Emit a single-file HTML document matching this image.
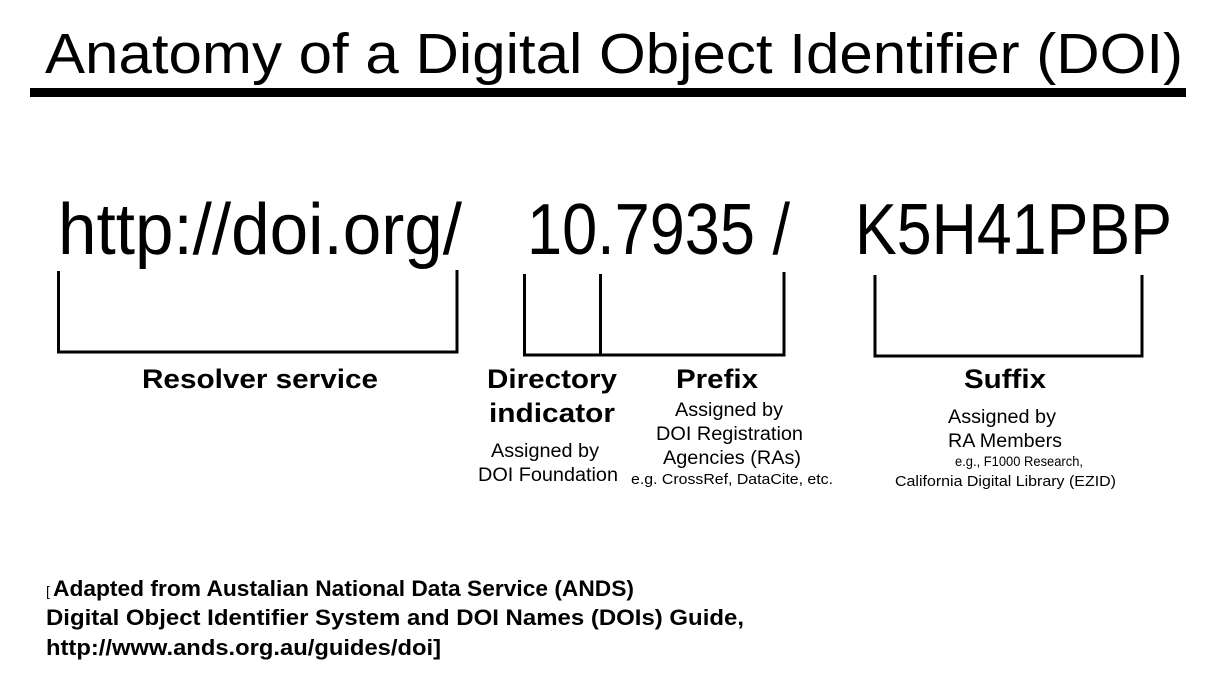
<!DOCTYPE html>
<html><head><meta charset="utf-8"><style>
html,body{margin:0;padding:0;background:#fff;}
svg{display:block;}
text{font-family:"Liberation Sans",Arial,sans-serif;fill:#000;}
.b{font-weight:bold;}
</style></head><body>
<svg width="1215" height="686" viewBox="0 0 1215 686" xmlns="http://www.w3.org/2000/svg">
<text x="45" y="73" font-size="57" textLength="1138" lengthAdjust="spacingAndGlyphs">Anatomy of a Digital Object Identifier (DOI)</text>
<rect x="30" y="88" width="1156" height="9" fill="#000"/>

<text x="58" y="254" font-size="72" textLength="404" lengthAdjust="spacingAndGlyphs">http://doi.org/</text>
<text x="527" y="254" font-size="72" textLength="263" lengthAdjust="spacingAndGlyphs">10.7935 /</text>
<text x="855" y="254" font-size="72" textLength="317" lengthAdjust="spacingAndGlyphs">K5H41PBP</text>

<g fill="none" stroke="#000" stroke-width="3">
<polyline points="58.5,271 58.5,352 457,352 457,270"/>
<polyline points="524.5,274 524.5,355 784,355 784,272"/>
<line x1="600.5" y1="274" x2="600.5" y2="355"/>
<polyline points="875,275 875,356 1142,356 1142,275"/>
</g>

<g font-size="27" font-weight="bold">
<text x="142" y="388" class="b" textLength="236" lengthAdjust="spacingAndGlyphs">Resolver service</text>
<text x="487" y="388" class="b" textLength="130" lengthAdjust="spacingAndGlyphs">Directory</text>
<text x="489" y="422" class="b" textLength="126" lengthAdjust="spacingAndGlyphs">indicator</text>
<text x="676" y="388" class="b" textLength="82" lengthAdjust="spacingAndGlyphs">Prefix</text>
<text x="964" y="388" class="b" textLength="82" lengthAdjust="spacingAndGlyphs">Suffix</text>
</g>

<g font-size="19">
<text x="491" y="457" textLength="108" lengthAdjust="spacingAndGlyphs">Assigned by</text>
<text x="478" y="481" textLength="140" lengthAdjust="spacingAndGlyphs">DOI Foundation</text>
<text x="675" y="416" textLength="108" lengthAdjust="spacingAndGlyphs">Assigned by</text>
<text x="656" y="440" textLength="147" lengthAdjust="spacingAndGlyphs">DOI Registration</text>
<text x="663" y="464" textLength="138" lengthAdjust="spacingAndGlyphs">Agencies (RAs)</text>
<text x="948" y="423" textLength="108" lengthAdjust="spacingAndGlyphs">Assigned by</text>
<text x="948" y="447" textLength="114" lengthAdjust="spacingAndGlyphs">RA Members</text>
</g>
<g font-size="14.5">
<text x="631" y="484" textLength="202" lengthAdjust="spacingAndGlyphs">e.g. CrossRef, DataCite, etc.</text>
<text x="955" y="466" font-size="14" textLength="128" lengthAdjust="spacingAndGlyphs">e.g., F1000 Research,</text>
<text x="895" y="486" textLength="221" lengthAdjust="spacingAndGlyphs">California Digital Library (EZID)</text>
</g>

<g font-size="22">
<text x="46" y="596" font-size="14">[</text>
<text x="53" y="596" class="b" textLength="581" lengthAdjust="spacingAndGlyphs">Adapted from Austalian National Data Service (ANDS)</text>
<text x="46" y="625" class="b" textLength="698" lengthAdjust="spacingAndGlyphs">Digital Object Identifier System and DOI Names (DOIs) Guide,</text>
<text x="46" y="655" class="b" textLength="395" lengthAdjust="spacingAndGlyphs">http://www.ands.org.au/guides/doi]</text>
</g>
</svg>
</body></html>
